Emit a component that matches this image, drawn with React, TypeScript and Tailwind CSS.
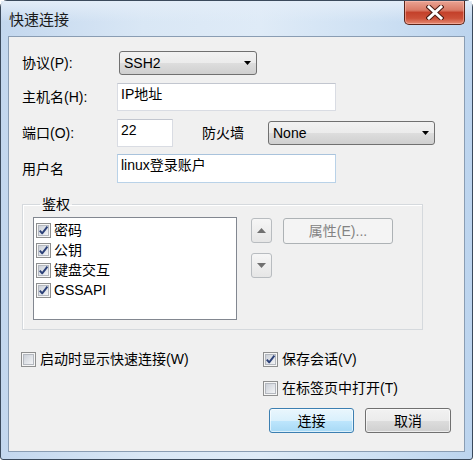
import React from 'react'

const FONT = { fontFamily: '"Liberation Sans", "Noto Sans CJK SC", sans-serif' }

function Check({ checked }: { checked?: boolean }) {
  return (
    <svg width="15" height="15" viewBox="0 0 15 15" className="shrink-0">
      <defs>
        <linearGradient id="cbfill" x1="0" y1="0" x2="1" y2="1">
          <stop offset="0" stopColor="#c9ced6" />
          <stop offset="1" stopColor="#f5f6f8" />
        </linearGradient>
      </defs>
      <rect x="0.5" y="0.5" width="14" height="14" fill="#f6f6f6" stroke="#8e8f8f" />
      <rect x="2.5" y="2.5" width="10" height="10" fill="url(#cbfill)" stroke="#b4b8bf" />
      {checked && (
        <path d="M3.8 7.6 L6.2 10.4 L11.4 3.6" fill="none" stroke="#2c4178" strokeWidth="1.9" strokeLinejoin="round" />
      )}
    </svg>
  )
}

function Arrow({ down = true, color = '#000', w = 7, h = 4 }: { down?: boolean; color?: string; w?: number; h?: number }) {
  return (
    <svg width={w} height={h} viewBox={`0 0 ${w} ${h}`} className="shrink-0">
      <path d={down ? `M0 0 L${w} 0 L${w / 2} ${h} Z` : `M0 ${h} L${w} ${h} L${w / 2} 0 Z`} fill={color} />
    </svg>
  )
}

function Combo({ value, className }: { value: string; className: string }) {
  return (
    <div
      className={
        'flex items-center h-[24px] pl-[4px] pr-[5px] rounded-[3px] border border-[#707070] bg-[linear-gradient(#f2f2f2_0%,#ebebeb_50%,#dddddd_51%,#cfcfcf_100%)] text-[14px] leading-[16px] text-black ' +
        className
      }
    >
      <span className="flex-1">{value}</span>
      <Arrow />
    </div>
  )
}

function Edit({ value, className }: { value?: string; className: string }) {
  return (
    <div
      className={
        'bg-white border pl-[3px] pt-[1px] text-[14px] leading-[18px] text-black ' + className
      }
    >
      {value}
    </div>
  )
}

export default function App() {
  return (
    <div className="w-[473px] h-[460px] bg-white text-black" style={FONT}>
      <div className="w-[473px] h-[460px] flex flex-col rounded-t-[7px] rounded-b-[3px] border border-[#3b4a5c] bg-[linear-gradient(90deg,#c3d7ee_0%,#d9e7f5_30%,#dfebf7_55%,#cde0f3_80%,#bcd4ee_100%)]">
        {/* title bar */}
        <div className="h-[35px] flex items-start pl-[8px] bg-[linear-gradient(#e3edf8_0%,rgba(227,237,248,0)_60%)]">
          <span className="mt-[10px] text-[15px] leading-[18px] text-[#1a1a1a]">快速连接</span>
          <div className="ml-auto mr-[7px] w-[61px] h-[24px] flex items-center justify-center rounded-b-[5px] border border-t-0 border-[#5a2418] bg-[linear-gradient(#e9a393_0%,#d97a66_40%,#c4412b_50%,#cc5038_75%,#e58a72_100%)] shadow-[inset_0_0_0_1px_rgba(255,200,190,0.5)]">
            <svg width="18" height="15" viewBox="0 0 18 15">
              <path d="M3 2 L15 13 M15 2 L3 13" stroke="#4a1a12" strokeWidth="5" strokeLinecap="square" />
              <path d="M3 2 L15 13 M15 2 L3 13" stroke="#ffffff" strokeWidth="3" strokeLinecap="square" />
            </svg>
          </div>
        </div>

        {/* client area */}
        <div className="mx-[7px] h-[416px] border border-[#8a9db3] bg-[#f0f0f0] flex flex-col text-[14px] leading-[16px]">
          <div className="flex items-center h-[24px] mt-[14px] pl-[13px]">
            <span className="w-[97px]">协议(P):</span>
            <Combo value="SSH2" className="w-[138px]" />
          </div>

          <div className="flex items-center h-[28px] mt-[8px] pl-[13px]">
            <span className="w-[95px]">主机名(H):</span>
            <Edit value="IP地址" className="w-[219px] h-[28px] border-[#d9dce3] border-t-[#c2c6cf]" />
          </div>

          <div className="flex items-center h-[28px] mt-[8px] pl-[13px]">
            <span className="w-[95px]">端口(O):</span>
            <Edit value="22" className="w-[56px] h-[28px] border-[#d9dce3] border-t-[#c2c6cf]" />
            <span className="ml-[29px] w-[66px]">防火墙</span>
            <Combo value="None" className="w-[167px]" />
          </div>

          <div className="flex items-center h-[29px] mt-[7px] pl-[13px]">
            <span className="w-[95px]">用户名</span>
            <Edit value="linux登录账户" className="w-[219px] h-[29px] border-[#b9d2e8] border-t-[#a9c3dc]" />
          </div>

          <fieldset className="mt-[13px] ml-[13px] w-[401px] border border-[#d5d9dd] shadow-[inset_1px_1px_0_#ffffff] pt-[5px] pl-[10px] pb-[9px] flex items-start">
            <legend className="ml-[7px] px-[2px] leading-[16px]">鉴权</legend>
            <div className="flex items-start">
              <div className="w-[204px] h-[103px] border border-[#828790] bg-white pt-[2px] pl-[2px] flex flex-col">
                {['密码', '公钥', '键盘交互', 'GSSAPI'].map((t) => (
                  <div key={t} className="flex items-center h-[20px] gap-[3px]">
                    <Check checked />
                    <span>{t}</span>
                  </div>
                ))}
              </div>
              <div className="ml-[14px] mt-[1px] flex flex-col">
                <div className="w-[21px] h-[25px] rounded-[3px] border border-[#b8bcc0] bg-[linear-gradient(#f6f6f6,#e6e6e6)] flex items-center justify-center">
                  <Arrow down={false} color="#707070" w={9} h={5} />
                </div>
                <div className="mt-[10px] w-[21px] h-[25px] rounded-[3px] border border-[#b8bcc0] bg-[linear-gradient(#f6f6f6,#e6e6e6)] flex items-center justify-center">
                  <Arrow color="#707070" w={9} h={5} />
                </div>
              </div>
              <div className="ml-[11px] mt-[1px] w-[110px] h-[26px] rounded-[3px] border border-[#adb2b5] bg-[#f4f4f4] flex items-center justify-center text-[#838383]">
                属性(E)...
              </div>
            </div>
          </fieldset>

          <div className="flex mt-[19px]">
            <div className="ml-[12px] w-[242px] flex items-start">
              <div className="flex items-center h-[20px] gap-[4px]">
                <Check />
                <span>启动时显示快速连接(W)</span>
              </div>
            </div>
            <div className="flex flex-col">
              <div className="flex items-center h-[20px] gap-[4px]">
                <Check checked />
                <span>保存会话(V)</span>
              </div>
              <div className="flex items-center h-[20px] gap-[4px] mt-[9px]">
                <Check />
                <span>在标签页中打开(T)</span>
              </div>
              <div className="flex mt-[10px] ml-[6px]">
                <div className="w-[85px] h-[25px] rounded-[3px] border border-[#3c7fb1] bg-[linear-gradient(#eaf6fd_0%,#d9f0fc_50%,#bee6fd_51%,#a7d9f5_100%)] shadow-[inset_0_0_0_1px_rgba(255,255,255,0.6)] flex items-center justify-center">
                  连接
                </div>
                <div className="ml-[11px] w-[86px] h-[25px] rounded-[3px] border border-[#707070] bg-[linear-gradient(#f2f2f2_0%,#ebebeb_50%,#dddddd_51%,#cfcfcf_100%)] shadow-[inset_0_0_0_1px_rgba(255,255,255,0.6)] flex items-center justify-center">
                  取消
                </div>
              </div>
            </div>
          </div>
        </div>
      </div>
    </div>
  )
}
